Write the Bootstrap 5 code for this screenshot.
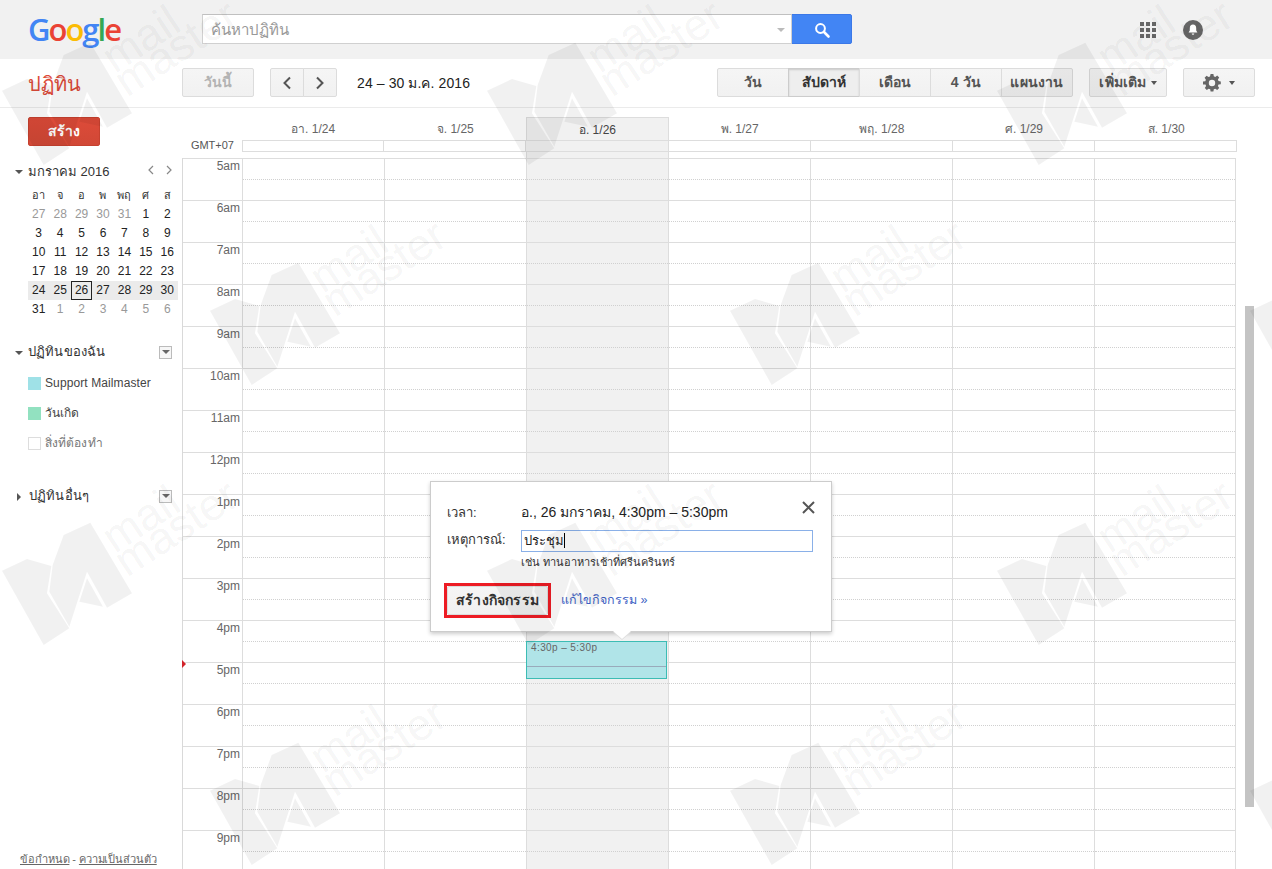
<!DOCTYPE html>
<html lang="th">
<head>
  <meta charset="UTF-8" />
  <meta name="viewport" content="width=device-width, initial-scale=1.0" />
  <title>Google Calendar</title>
  <link href="https://cdn.jsdelivr.net/npm/bootstrap@5.3.0/dist/css/bootstrap.min.css" rel="stylesheet" />
  <script src="https://cdn.jsdelivr.net/npm/bootstrap@5.3.0/dist/js/bootstrap.bundle.min.js"></script>
  <style>
    html, body { height: 869px; overflow: hidden; }
    body { font-family: "Liberation Sans", Arial, sans-serif; font-size: 13px; color: #222; background: #fff; position: relative; }

    /* top bar */
    .top-bar { height: 59px; background: #f1f1f1; padding-left: 28px; }
    .g-logo { width: 174px; font-family: "Open Sans", sans-serif; font-size: 31px; font-weight: 600; letter-spacing: -2px; line-height: 59px; }
    .search-box { width: 650px; height: 30px; margin-top: -1px; }
    .search-box .form-control { height: 30px; font-size: 15px; padding: 0 8px; border: 1px solid #d0d0d0; border-top-color: #c0c0c0; box-shadow: none; }
    .search-box .form-control::placeholder { color: #999; }
    .search-drop { position: absolute; right: 67px; top: 14px; width: 0; height: 0; border: 4px solid transparent; border-top: 4px solid #bbb; z-index: 5; }
    .search-btn { width: 61px; height: 30px; background: #4285f4; border: 1px solid #3b78e7; border-radius: 0 2px 2px 0; padding: 0; }
    .top-icons { margin-left: auto; padding-right: 69px; gap: 27px; }

    /* toolbar */
    .tool-bar { height: 49px; border-bottom: 1px solid #ebebeb; padding: 9px 17px 0 28px; }
    .page-title { width: 154px; color: #dd4b39; font-size: 20px; line-height: 32px; }
    .g-btn { height: 29px; padding: 0 8px; font-size: 14px; font-weight: 700; line-height: 27px; letter-spacing: .2px; color: #555; background: linear-gradient(#f5f5f5, #f1f1f1); border: 1px solid #dcdcdc; border-radius: 2px; white-space: nowrap; }
    .g-btn.is-off { color: #b3b3b3; width: 72px; }
    .g-btn.is-on { background: #eee; color: #333; box-shadow: inset 0 1px 2px rgba(0,0,0,.15); border-color: #ccc; }
    .g-btn.nav-arrow { width: 34px; padding: 0; }
    .g-btn.view-btn { width: 72px; padding: 0; }
    .btn-join > .g-btn { border-radius: 0; margin-left: -1px; }
    .btn-join > .g-btn:first-child { border-radius: 2px 0 0 2px; margin-left: 0; }
    .btn-join > .g-btn:last-child { border-radius: 0 2px 2px 0; }
    .range-text { margin-left: 20px; font-size: 14px; line-height: 30px; letter-spacing: .1px; color: #222; }
    .spacer-16 { width: 16px; }

    /* sidebar */
    .side-col { width: 182px; flex: none; padding: 9px 0 0 28px; position: relative; height: 761px; }
    .create-btn { width: 72px; height: 29px; padding: 0; font-size: 14px; font-weight: 700; line-height: 27px; color: #fff; background: linear-gradient(#dd4b39, #d14836); border: 1px solid #c6412f; border-radius: 2px; }
    .mini-head { margin: 16px 10px 0 -13px; height: 20px; font-size: 13px; color: #333; line-height: 20px; }
    .mini-arrows { gap: 12px; margin-top: -5px; }
    .tri-down { display: inline-block; width: 0; height: 0; border: 4px solid transparent; border-top: 4px solid #555; margin-top: 4px; margin-right: 5px; vertical-align: middle; }
    .tri-right { display: inline-block; width: 0; height: 0; border: 4px solid transparent; border-left: 4px solid #555; margin-right: 4px; margin-left: 2px; vertical-align: middle; }
    .mini-table { width: 150px; margin-top: 4px; border-collapse: collapse; font-size: 12px; table-layout: fixed; }
    .mini-table td, .mini-table th { height: 19px; padding: 0; text-align: center; font-weight: 400; color: #222; line-height: 17px; }
    .mini-table th { font-size: 11px; color: #333; }
    .mini-table .dim { color: #999; }
    .mini-table tr.wk td { background: #ebebeb; }
    .mini-table td.tdy { outline: 1px solid #222; outline-offset: -1px; }
    .side-head { margin: 0 10px 0 -13px; height: 20px; font-size: 13px; letter-spacing: .15px; line-height: 20px; color: #333; }
    .menu-box { width: 13px; height: 13px; border: 1px solid #bbb; background: #f6f6f6; display: flex; align-items: center; justify-content: center; }
    .menu-box::after { content: ""; width: 0; height: 0; border: 4px solid transparent; border-top: 4px solid #666; margin-top: 4px; }
    .cal-item { height: 30px; font-size: 12px; letter-spacing: .1px; color: #444; gap: 4px; line-height: 30px; }
    .cal-item .swatch { width: 13px; height: 13px; flex: none; }
    .foot-links { position: absolute; left: 20px; top: 743px; font-size: 11px; letter-spacing: -.1px; color: #666; white-space: nowrap; }
    .foot-links a { color: #666; }

    /* calendar */
    .cal-wrap { width: 1056px; flex: none; }
    .day-heads { display: grid; grid-template-columns: 60px repeat(7, 142.2px); height: 32px; }
    .day-head { font-size: 12px; color: #666; text-align: center; line-height: 20px; padding-top: 11px; }
    .day-head.is-today { background: #f1f1f1; margin-top: 9px; padding-top: 2px; color: #444; border: 1px solid #ddd; border-bottom: 0; }
    .allday-row { display: grid; grid-template-columns: 60px repeat(7, 142.2px); height: 12px; }
    .allday-row .gmt { font-size: 11px; color: #555; line-height: 10px; text-align: right; padding-right: 8px; }
    .allday-row .cell { border: 1px solid #ddd; border-left-width: 0; background: #fff; }
    .allday-row .cell:nth-child(2) { border-left-width: 1px; }
    .allday-row .cell.is-today { background: #f1f1f1; }
    .allday-gap { display: grid; grid-template-columns: 60px repeat(7, 142.2px); height: 6px; }
    .allday-gap div { grid-column: 4; background: #f1f1f1; border: 1px solid #ddd; border-width: 0 1px; }
    .cal-body { border-left: 1px solid #d9d9d9; }
    .hour-row { display: grid; grid-template-columns: 59px repeat(7, 142px); height: 42px; }
    .hour-label { font-size: 12px; color: #666; text-align: right; padding-right: 2px; border-top: 1px solid #ddd; line-height: 14px; }
    .hour-cell { position: relative; border-top: 1px solid #ddd; border-left: 1px solid #ddd; }
    .hour-cell:last-child { border-right: 1px solid #ddd; }
    .hour-cell::after { content: ""; position: absolute; left: 0; right: 0; top: 20px; border-top: 1px dotted #d0d0d0; }
    .hour-cell.is-today { background: #f1f1f1; }
    .ev-block { position: absolute; left: -1px; top: 20px; width: 141px; height: 38px; background: #b0e4e8; border: 1px solid #3cbcb4; z-index: 2; font-size: 10px; color: #666; padding: 0 4px; line-height: 12px; letter-spacing: .4px; }
    .now-line { position: absolute; left: 0; right: 0; top: 24px; height: 1px; background: #9ab; }
    .now-mark { position: absolute; left: -1px; top: 502px; width: 0; height: 0; border: 4px solid transparent; border-left: 4px solid #d2232a; }

    .scroll-col { width: 9px; margin-left: 7px; }
    .scroll-thumb { margin-top: 198px; height: 501px; background: #c4c4c4; }

    /* quick add bubble */
    .bubble { position: absolute; left: 430px; top: 481px; width: 402px; height: 151px; background: #fff; border: 1px solid #ccc; box-shadow: 0 2px 4px rgba(0,0,0,.2); padding: 21px 16px 0; z-index: 5; }
    .bubble::after { content: ""; position: absolute; left: 182px; top: 149px; width: 0; height: 0; border: 9px solid transparent; border-top: 8px solid #fff; filter: drop-shadow(0 1px 0 #ddd); }
    .bubble-x { position: absolute; right: 15px; top: 15px; width: 15px; height: 15px; padding: 0; border: 0; background: none; }
    .b-label { width: 74px; flex: none; font-size: 13px; color: #333; }
    .b-time { font-size: 14px; color: #222; line-height: 18px; }
    .b-time-row { margin-bottom: 7px; }
    .b-input { width: 292px; height: 22px; padding: 0 2px; border: 1px solid #8ab0e8; border-radius: 0; font-size: 13px; line-height: 20px; color: #222; }
    .text-bar { display: inline-block; width: 1px; height: 15px; background: #000; vertical-align: -3px; }
    .b-hint { margin: 2px 0 0 74px; font-size: 11px; color: #333; line-height: 16px; }
    .b-actions { margin-top: 13px; }
    .red-box { border: 3px solid #ed1c24; width: 107px; height: 35px; margin-left: -3px; }
    .red-box .g-btn { width: 101px; height: 29px; padding: 0; color: #333; }
    .edit-link { color: #3d5fc4; font-size: 12.5px; text-decoration: none; margin-left: 10px; }

    /* watermark */
    .wm-layer { position: absolute; left: 0; top: 0; width: 1272px; height: 869px; overflow: hidden; pointer-events: none; z-index: 10; }
    .wm-mark { position: absolute; width: 270px; height: 180px; overflow: visible; fill: rgba(0,0,0,.055); font-family: "Liberation Sans", sans-serif; }
  </style>
</head>
<body>

  <div class="top-bar d-flex align-items-center">
    <div class="g-logo"><span style="color:#4285f4">G</span><span style="color:#ea4335">o</span><span style="color:#fbbc05">o</span><span style="color:#4285f4">g</span><span style="color:#34a853">l</span><span style="color:#ea4335">e</span></div>
    <div class="search-box input-group position-relative">
      <input type="text" class="form-control rounded-0" placeholder="ค้นหาปฏิทิน" aria-label="ค้นหาปฏิทิน" />
      <span class="search-drop"></span>
      <button class="search-btn" type="button" aria-label="search">
        <svg width="18" height="18" viewBox="0 0 18 18"><circle cx="7.5" cy="7.5" r="4.4" fill="none" stroke="#fff" stroke-width="2"/><path d="M11 11l4.5 4.5" stroke="#fff" stroke-width="2.6" stroke-linecap="round"/></svg>
      </button>
    </div>
    <div class="top-icons d-flex align-items-center">
      <svg width="16" height="16" viewBox="0 0 16 16" fill="#666"><rect x="0" y="0" width="4" height="4"/><rect x="6" y="0" width="4" height="4"/><rect x="12" y="0" width="4" height="4"/><rect x="0" y="6" width="4" height="4"/><rect x="6" y="6" width="4" height="4"/><rect x="12" y="6" width="4" height="4"/><rect x="0" y="12" width="4" height="4"/><rect x="6" y="12" width="4" height="4"/><rect x="12" y="12" width="4" height="4"/></svg>
      <svg width="20" height="20" viewBox="0 0 20 20"><circle cx="10" cy="10" r="10" fill="#666"/><path d="M10 4.5c-2 0-3.2 1.5-3.2 3.4v2.6L5.6 12.4h8.8l-1.2-1.9V7.9c0-1.9-1.2-3.4-3.2-3.4z" fill="#fff"/><path d="M8.7 13.4a1.3 1.3 0 0 0 2.6 0z" fill="#fff"/></svg>
    </div>
  </div>

  <div class="tool-bar d-flex">
    <div class="page-title">ปฏิทิน</div>
    <button class="g-btn is-off" type="button">วันนี้</button>
    <div class="spacer-16"></div>
    <div class="btn-join d-flex">
      <button class="g-btn nav-arrow" type="button" aria-label="prev"><svg width="10" height="14" viewBox="0 0 10 14"><path d="M8 1.5L2.5 7 8 12.5" fill="none" stroke="#555" stroke-width="2"/></svg></button>
      <button class="g-btn nav-arrow" type="button" aria-label="next"><svg width="10" height="14" viewBox="0 0 10 14"><path d="M2 1.5L7.5 7 2 12.5" fill="none" stroke="#555" stroke-width="2"/></svg></button>
    </div>
    <div class="range-text">24 – 30 ม.ค. 2016</div>
    <div class="btn-join d-flex ms-auto">
      <button class="g-btn view-btn" type="button">วัน</button>
      <button class="g-btn view-btn is-on" type="button">สัปดาห์</button>
      <button class="g-btn view-btn" type="button">เดือน</button>
      <button class="g-btn view-btn" type="button">4 วัน</button>
      <button class="g-btn view-btn" type="button">แผนงาน</button>
    </div>
    <div class="spacer-16"></div>
    <button class="g-btn" type="button" style="width:78px;padding:0">เพิ่มเติม <span class="tri-down" style="margin:3px 0 0 0;border-width:3px;border-top-width:4px"></span></button>
    <div class="spacer-16"></div>
    <button class="g-btn" type="button" style="width:72px" aria-label="settings">
      <svg width="18" height="18" viewBox="0 0 18 18" class="align-middle"><path fill="#666" fill-rule="evenodd" d="M7.6 0h2.8l.4 2.3 1.5.6 1.9-1.3 2 2-1.3 1.9.6 1.5 2.3.4v2.8l-2.3.4-.6 1.5 1.3 1.9-2 2-1.9-1.3-1.5.6-.4 2.3H7.6l-.4-2.3-1.5-.6-1.9 1.3-2-2 1.3-1.9-.6-1.5L0 10.4V7.6l2.3-.4.6-1.5L1.6 3.8l2-2 1.9 1.3 1.5-.6zM9 5.8a3.2 3.2 0 1 0 0 6.4 3.2 3.2 0 0 0 0-6.4z"/></svg>
      <span class="tri-down" style="margin:3px 0 0 3px;border-width:3px;border-top-width:4px"></span>
    </button>
  </div>

  <div class="d-flex">
    <aside class="side-col">
      <button class="create-btn d-block" type="button">สร้าง</button>
      <div class="mini-head d-flex align-items-center">
        <span class="tri-down"></span><span>มกราคม 2016</span>
        <span class="ms-auto d-flex mini-arrows">
          <svg width="6" height="10" viewBox="0 0 6 10"><path d="M5 1L1 5l4 4" fill="none" stroke="#888" stroke-width="1.2"/></svg>
          <svg width="6" height="10" viewBox="0 0 6 10"><path d="M1 1l4 4-4 4" fill="none" stroke="#888" stroke-width="1.2"/></svg>
        </span>
      </div>
      <table class="mini-table"><tbody id="miniBody"></tbody></table>

      <div class="side-head d-flex align-items-center justify-content-between" style="margin-top:23px">
        <span><span class="tri-down"></span>ปฏิทินของฉัน</span><span class="menu-box"></span>
      </div>
      <div class="cal-item d-flex align-items-center" style="margin-top:6px"><span class="swatch" style="background:#9fe1e7"></span>Support Mailmaster</div>
      <div class="cal-item d-flex align-items-center"><span class="swatch" style="background:#92e1c0"></span>วันเกิด</div>
      <div class="cal-item d-flex align-items-center" style="color:#777"><span class="swatch" style="border:1px solid #ddd"></span>สิ่งที่ต้องทำ</div>
      <div class="side-head d-flex align-items-center justify-content-between" style="margin-top:28px">
        <span><span class="tri-right"></span>ปฏิทินอื่นๆ</span><span class="menu-box"></span>
      </div>
      <div class="foot-links"><a href="#">ข้อกำหนด</a> - <a href="#">ความเป็นส่วนตัว</a></div>
    </aside>

    <main class="cal-wrap">
      <div class="day-heads" id="dayHeads"></div>
      <div class="allday-row" id="alldayRow"></div>
      <div class="allday-gap"><div></div></div>
      <div class="cal-body position-relative" id="calBody">
        <span class="now-mark"></span>
      </div>
    </main>

    <div class="scroll-col"><div class="scroll-thumb"></div></div>
  </div>

  <!-- quick add -->
  <div class="bubble">
    <button class="bubble-x" type="button" aria-label="close"><svg width="15" height="15" viewBox="0 0 15 15"><path d="M2 2l11 11M13 2L2 13" stroke="#555" stroke-width="2"/></svg></button>
    <div class="d-flex b-time-row"><span class="b-label">เวลา:</span><span class="b-time">อ., 26 มกราคม, 4:30pm – 5:30pm</span></div>
    <div class="d-flex"><span class="b-label">เหตุการณ์:</span><div class="b-input">ประชุม<span class="text-bar"></span></div></div>
    <div class="b-hint">เช่น ทานอาหารเช้าที่ศรีนครินทร์</div>
    <div class="d-flex align-items-center b-actions">
      <div class="red-box"><button class="g-btn" type="button">สร้างกิจกรรม</button></div>
      <a href="#" class="edit-link">แก้ไขกิจกรรม »</a>
    </div>
  </div>

  <!-- watermark -->
  <div class="wm-layer" id="wmLayer"></div>

  <template id="wmTpl">
    <svg class="wm-mark" viewBox="0 0 810 540">
      <polygon points="30,272 105,237 178,258 165,340 232,445 155,495"/>
      <polygon points="215,165 295,128 420,340 345,383 285,275 232,440 172,335 182,255"/>
      <polygon points="285,295 333,380 262,365"/>
      <text transform="translate(368,222) rotate(-33)" font-size="134">mail</text>
      <text transform="translate(405,293) rotate(-33)" font-size="134">master</text>
    </svg>
  </template>

  <script>
    const days = ["อา. 1/24", "จ. 1/25", "อ. 1/26", "พ. 1/27", "พฤ. 1/28", "ศ. 1/29", "ส. 1/30"];
    const hours = ["5am","6am","7am","8am","9am","10am","11am","12pm","1pm","2pm","3pm","4pm","5pm","6pm","7pm","8pm","9pm"];

    // day headers + all-day strip
    let heads = "<div></div>", strip = '<div class="gmt">GMT+07</div>';
    days.forEach((d, i) => {
      heads += `<div class="day-head${i == 2 ? " is-today" : ""}">${d}</div>`;
      strip += `<div class="cell${i == 2 ? " is-today" : ""}"></div>`;
    });
    document.getElementById("dayHeads").innerHTML = heads;
    document.getElementById("alldayRow").innerHTML = strip;

    // hour grid
    let rows = "";
    hours.forEach(h => {
      rows += `<div class="hour-row"><div class="hour-label">${h}</div>`;
      for (let i = 0; i < 7; i++) {
        let inner = "";
        if (i == 2 && h == "4pm") inner = `<div class="ev-block">4:30p – 5:30p<div class="now-line"></div></div>`;
        rows += `<div class="hour-cell${i == 2 ? " is-today" : ""}">${inner}</div>`;
      }
      rows += "</div>";
    });
    document.getElementById("calBody").insertAdjacentHTML("beforeend", rows);

    // mini month
    const mini = [
      ["อา","จ","อ","พ","พฤ","ศ","ส"],
      [27,28,29,30,31,1,2],[3,4,5,6,7,8,9],[10,11,12,13,14,15,16],[17,18,19,20,21,22,23],[24,25,26,27,28,29,30],[31,1,2,3,4,5,6]
    ];
    let miniHtml = "";
    mini.forEach((wk, r) => {
      miniHtml += `<tr class="${r == 5 ? "wk" : ""}">`;
      wk.forEach((d, c) => {
        const dim = (r == 1 && c < 5) || (r == 6 && c > 0);
        const cls = (dim ? "dim " : "") + (r == 5 && d == 26 ? "tdy" : "");
        miniHtml += r == 0 ? `<th>${d}</th>` : `<td class="${cls}">${d}</td>`;
      });
      miniHtml += "</tr>";
    });
    document.getElementById("miniBody").innerHTML = miniHtml;

    // watermark tiles
    const spots = [[-8,0],[477,0],[987,0],[200,220],[720,220],[1240,220],[-8,480],[477,480],[987,480],[200,700],[720,700],[1240,700]];
    const tpl = document.getElementById("wmTpl");
    const layer = document.getElementById("wmLayer");
    spots.forEach(p => {
      const el = tpl.content.firstElementChild.cloneNode(true);
      el.style.left = p[0] + "px";
      el.style.top = p[1] + "px";
      layer.appendChild(el);
    });
  </script>
</body>
</html>
